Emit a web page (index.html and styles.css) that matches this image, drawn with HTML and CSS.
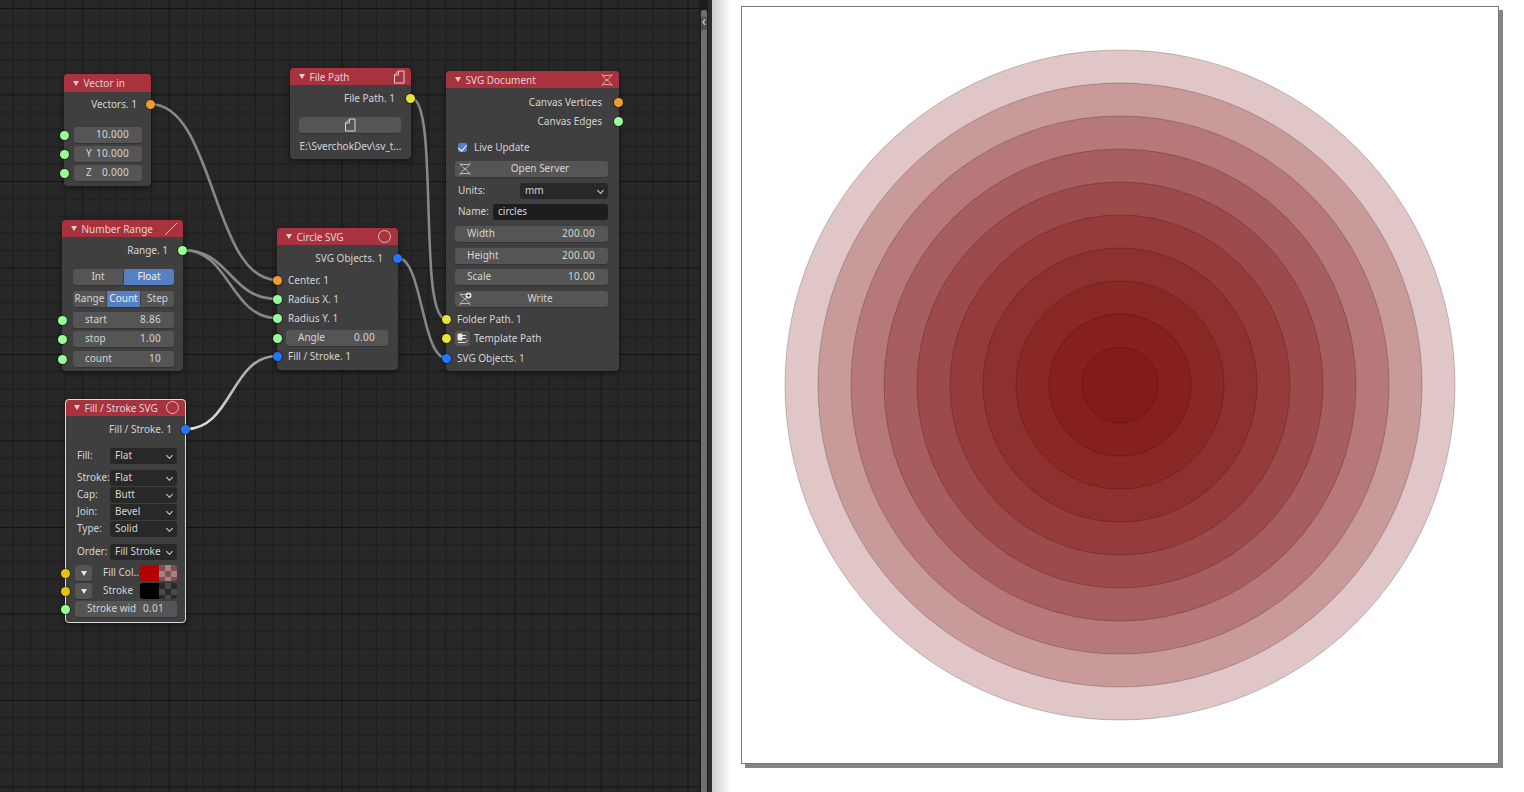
FILE: index.html
```html
<!DOCTYPE html>
<html lang="en">
<head>
<meta charset="UTF-8">
<meta name="viewport" content="width=device-width, initial-scale=1.0">
<title>SVG Document nodes</title>
<link rel="stylesheet" href="styles.css">
</head>
<body>

<svg class="defs" width="0" height="0">
  <defs>
    <pattern id="grid" patternUnits="userSpaceOnUse" width="86.5" height="86.5">
      <path class="grid-minor" d="M13.1 0V86.5M30.4 0V86.5M47.7 0V86.5M65 0V86.5M0 25.6H86.5M0 42.9H86.5M0 60.2H86.5M0 77.5H86.5"/>
      <path class="grid-major" d="M82.5 0V86.5M0 8.5H86.5"/>
    </pattern>
    <linearGradient id="wireFill" gradientUnits="userSpaceOnUse" x1="186" y1="429" x2="277" y2="356">
      <stop offset="0" stop-color="#e6e6e6"/>
      <stop offset="1" stop-color="#9a9a9a"/>
    </linearGradient>
    <symbol id="icoDna" viewBox="0 0 14 14">
      <path d="M2 1C2 5 12 9 12 13M12 1C12 5 2 9 2 13M3 2.5H11M3 11.5H11" fill="none" stroke="currentColor" stroke-width="1" stroke-opacity="0.75"/>
    </symbol>
    <symbol id="icoFile" viewBox="0 0 14 14">
      <path d="M6.5 1H12V13H2.5V5ZM6.5 1V5H2.5" fill="none" stroke="currentColor" stroke-width="1"/>
    </symbol>
  </defs>
</svg>

<div class="editor">
  <svg class="grid-layer" width="100%" height="100%"><rect width="100%" height="100%" fill="url(#grid)"/></svg>

  <!-- wires -->
  <svg class="wire-layer" width="712" height="792">
    <g class="wires">
      <path d="M150 104C215 104 212 280 277 280"/>
      <path d="M183 250C230 250 230 299 277 299"/>
      <path d="M183 250C230 250 230 318 277 318"/>
      <path d="M411 98C440 98 417 319 446 319"/>
      <path d="M398 258C422 258 422 358 446 358"/>
      <path class="wire-hot" d="M186 429C232 429 231 356 277 356"/>
    </g>
  </svg>

  <div class="node n-vector">
    <div class="title"><i class="arrow"></i><span>Vector in</span></div>
    <div class="row row-out mt4">Vectors. 1<b class="sock right orange"></b></div>
    <div class="row mt15"><b class="sock left green"></b><div class="field"><span></span><span>10.000</span></div></div>
    <div class="row mt3"><b class="sock left green"></b><div class="field"><span>Y</span><span>10.000</span></div></div>
    <div class="row mt3"><b class="sock left green"></b><div class="field"><span>Z</span><span>0.000</span></div></div>
  </div>

  <div class="node n-range">
    <div class="title"><i class="arrow"></i><span>Number Range</span>
      <svg class="ico" width="14" height="14" viewBox="0 0 14 14"><path d="M1 13L13 1" stroke="currentColor" fill="none"/></svg>
    </div>
    <div class="row row-out mt5">Range. 1<b class="sock right green"></b></div>
    <div class="row mt11"><div class="seg"><span>Int</span><span class="on">Float</span></div></div>
    <div class="row mt6"><div class="seg"><span>Range</span><span class="on">Count</span><span>Step</span></div></div>
    <div class="row mt5"><b class="sock left green"></b><div class="field"><span>start</span><span>8.86</span></div></div>
    <div class="row mt3"><b class="sock left green"></b><div class="field"><span>stop</span><span>1.00</span></div></div>
    <div class="row mt4"><b class="sock left green"></b><div class="field"><span>count</span><span>10</span></div></div>
  </div>

  <div class="node n-fill">
    <div class="title"><i class="arrow"></i><span>Fill / Stroke SVG</span><i class="ring"></i></div>
    <div class="row row-out mt5">Fill / Stroke. 1<b class="sock right blue"></b></div>
    <div class="row mt11"><span class="lab">Fill:</span><div class="sel">Flat</div></div>
    <div class="row mt6"><span class="lab">Stroke:</span><div class="sel">Flat</div></div>
    <div class="row mt1"><span class="lab">Cap:</span><div class="sel">Butt</div></div>
    <div class="row mt1"><span class="lab">Join:</span><div class="sel">Bevel</div></div>
    <div class="row mt1"><span class="lab">Type:</span><div class="sel">Solid</div></div>
    <div class="row mt7"><span class="lab">Order:</span><div class="sel">Fill Stroke</div></div>
    <div class="row mt5"><b class="sock left yellow"></b><div class="drop"><i class="arrow"></i></div><span class="col-name">Fill Col..</span><div class="swatch sw-red"><i></i><i></i></div></div>
    <div class="row mt2"><b class="sock left yellow"></b><div class="drop"><i class="arrow"></i></div><span class="col-name">Stroke</span><div class="swatch sw-black"><i></i><i></i></div></div>
    <div class="row mt2"><b class="sock left green"></b><div class="field"><span>Stroke wid</span><span>0.01</span></div></div>
  </div>

  <div class="node n-file">
    <div class="title"><i class="arrow"></i><span>File Path</span>
      <svg class="ico" width="14" height="14"><use href="#icoFile"/></svg>
    </div>
    <div class="row row-out mt5">File Path. 1<b class="sock right yellow"></b></div>
    <div class="row mt11"><div class="btn btn-center"><svg width="14" height="14"><use href="#icoFile"/></svg></div></div>
    <div class="row mt5 path-text">E:\SverchokDev\sv_t...</div>
  </div>

  <div class="node n-circle">
    <div class="title"><i class="arrow"></i><span>Circle SVG</span><i class="ring"></i></div>
    <div class="row row-out mt5">SVG Objects. 1<b class="sock right blue"></b></div>
    <div class="row row-in mt6"><b class="sock left orange"></b>Center. 1</div>
    <div class="row row-in mt3"><b class="sock left green"></b>Radius X. 1</div>
    <div class="row row-in mt3"><b class="sock left green"></b>Radius Y. 1</div>
    <div class="row mt4"><b class="sock left green"></b><div class="field"><span>Angle</span><span>0.00</span></div></div>
    <div class="row row-in mt2"><b class="sock left blue"></b>Fill / Stroke. 1</div>
  </div>

  <div class="node n-doc">
    <div class="title"><i class="arrow"></i><span>SVG Document</span>
      <svg class="ico" width="14" height="14"><use href="#icoDna"/></svg>
    </div>
    <div class="row row-out mt6">Canvas Vertices<b class="sock right orange"></b></div>
    <div class="row row-out mt3">Canvas Edges<b class="sock right green"></b></div>
    <div class="row row-check mt10"><i class="check"></i>Live Update</div>
    <div class="row mt6"><div class="btn"><svg width="14" height="14"><use href="#icoDna"/></svg><span>Open Server</span></div></div>
    <div class="row mt6"><span class="lab lab-wide">Units:</span><div class="sel">mm</div></div>
    <div class="row mt5"><span class="lab lab-name">Name:</span><div class="text-in">circles</div></div>
    <div class="row mt6"><div class="field"><span>Width</span><span>200.00</span></div></div>
    <div class="row mt6"><div class="field"><span>Height</span><span>200.00</span></div></div>
    <div class="row mt5"><div class="field"><span>Scale</span><span>10.00</span></div></div>
    <div class="row mt6"><div class="btn"><svg width="14" height="14" viewBox="0 0 14 14"><use href="#icoDna"/><circle cx="10.5" cy="3.5" r="3" fill="#e6e6e6"/><path d="M10.5 1.8V5.2M8.8 3.5H12.2" stroke="#444"/></svg><span>Write</span></div></div>
    <div class="row row-in mt4"><b class="sock left yellow"></b>Folder Path. 1</div>
    <div class="row row-plug mt3"><b class="sock left yellow"></b>
      <div class="plug"><svg width="14" height="14" viewBox="0 0 14 14"><path d="M3 3H7V9H3ZM7 4.5H11M7 7.5H11M3 11.5H9.5C11 11.5 12 10.5 12 9.5" fill="none" stroke="#e6e6e6"/><path d="M3 3H7V9H3Z" fill="#e6e6e6"/></svg></div>
      Template Path
    </div>
    <div class="row row-in mt4"><b class="sock left blue"></b>SVG Objects. 1</div>
  </div>

  <div class="scroll-gutter"><div class="scroll-thumb"><div class="scroll-tab">&#8249;</div></div></div>
</div>

<div class="viewer">
  <div class="sheet">
    <svg class="circles" width="756" height="756" viewBox="0 0 756 756">
      <g transform="translate(378 378)">
        <circle r="335"/><circle r="302"/><circle r="269"/><circle r="236"/><circle r="203"/>
        <circle r="170"/><circle r="137"/><circle r="104"/><circle r="71"/><circle r="38"/>
      </g>
    </svg>
  </div>
</div>

</body>
</html>
```
FILE: styles.css
```css
* {
  box-sizing: border-box;
}
body {
  margin: 0;
  width: 1524px;
  height: 792px;
  overflow: hidden;
  display: flex;
  background-color: #fff;
  font-family: "Noto Sans", "Open Sans", sans-serif;
  font-size: 10px;
  color: #d4d4d4;
}
.defs {
  position: absolute;
}
.grid-minor {
  fill: none;
  stroke: #1c1c1c;
  stroke-width: 1;
}
.grid-major {
  fill: none;
  stroke: #131313;
  stroke-width: 1;
}

/* node editor */
.editor {
  position: relative;
  flex: 0 0 712px;
  height: 792px;
  background-color: #272727;
  overflow: hidden;
}
.grid-layer, .wire-layer {
  position: absolute;
  left: 0;
  top: 0;
}
.wires path {
  fill: none;
  stroke: #878787;
  stroke-width: 2.6;
}
.wires .wire-hot {
  stroke: url(#wireFill);
}
.scroll-gutter {
  position: absolute;
  right: 0;
  top: 0;
  bottom: 0;
  width: 14px;
  padding: 10px 5px 0 3px;
  background: linear-gradient(to right, #27272700, #1c1c1c 20%, #1c1c1c 70%, #2c2c2c 72%);
}
.scroll-thumb {
  height: 100%;
  width: 6px;
  background-color: #6f6f6f;
  border-radius: 3px 3px 0 0;
}
.scroll-tab {
  height: 20px;
  border-radius: 3px 3px 0 0;
  background: linear-gradient(#6f6f6f 30%, #505050 40%);
  color: #d0d0d0;
  font-size: 14px;
  line-height: 22px;
  text-align: center;
}

.node {
  position: absolute;
  background-color: #3f3f3f;
  border-radius: 4px;
  box-shadow: 0 2px 6px rgba(0, 0, 0, 0.45);
}
.n-vector { left: 64px; top: 74px; width: 87px; height: 112px; --pl: 10px; --pr: 9px; --po: 14px; }
.n-range { left: 62px; top: 220px; width: 121px; height: 151px; --pl: 11px; --pr: 9px; --po: 15px; }
.n-fill { left: 65px; top: 399px; width: 121px; height: 224px; --pl: 10px; --pr: 9px; --po: 14px; outline: 1px solid #dcdcdc; outline-offset: -1px; }
.n-file { left: 290px; top: 68px; width: 121px; height: 91px; --pl: 9px; --pr: 10px; --po: 16px; }
.n-circle { left: 277px; top: 228px; width: 121px; height: 142px; --pl: 9px; --pr: 10px; --po: 15px; }
.n-doc { left: 446px; top: 71px; width: 173px; height: 300px; --pl: 9px; --pr: 11px; --po: 17px; }
.n-vector .title { height: 18px; }

.title {
  display: flex;
  align-items: center;
  height: 17px;
  padding: 0 5px 0 9px;
  background-color: #a8323e;
  border-radius: 4px 4px 0 0;
  color: #e0d4d4;
}
.title span {
  flex: 1;
  white-space: nowrap;
}
.arrow {
  flex: none;
  width: 0;
  height: 0;
  margin-right: 4.5px;
  border-left: 3px solid transparent;
  border-right: 3px solid transparent;
  border-top: 5px solid #e0d0d0;
}
.ring {
  flex: none;
  width: 13px;
  height: 13px;
  margin-right: 2px;
  border: 1px solid #d8c0c0;
  border-radius: 50%;
}
.ico {
  flex: none;
  color: #e0d0d0;
}

.row {
  position: relative;
  display: flex;
  align-items: center;
  height: 16px;
  padding: 0 var(--pr) 0 var(--pl);
  white-space: nowrap;
}
.row-out {
  justify-content: flex-end;
  padding-right: var(--po);
}
.row-in {
  padding-left: 11px;
}
.row-check {
  padding-left: 12px;
}
.row-plug {
  padding-left: 9px;
  gap: 4px;
}
.path-text {
  justify-content: center;
  padding: 0;
}

.mt1 { margin-top: 1px; }
.mt2 { margin-top: 2px; }
.mt3 { margin-top: 3px; }
.mt4 { margin-top: 4px; }
.mt5 { margin-top: 5px; }
.mt6 { margin-top: 6px; }
.mt7 { margin-top: 7px; }
.mt10 { margin-top: 10px; }
.mt11 { margin-top: 11px; }
.mt15 { margin-top: 15px; }

/* sockets sit on the node edge */
.sock {
  position: absolute;
  top: 3.5px;
  width: 9px;
  height: 9px;
  border-radius: 50%;
  box-shadow: 0 0 0 1px rgba(0, 0, 0, 0.35);
}
.sock.left { left: -4.5px; }
.sock.right { right: -4px; }
.orange { background-color: #ed9e2f; }
.green { background-color: #96ff96; }
.blue { background-color: #1f78ff; }
.yellow { background-color: #e8e337; }
.n-fill .yellow { background-color: #e8c400; }

.field, .btn, .seg span, .drop {
  background-color: #555;
  border-radius: 3px;
  box-shadow: 0 1px 0 rgba(0, 0, 0, 0.18);
}
.field {
  flex: 1;
  display: flex;
  justify-content: space-between;
  align-items: center;
  height: 16px;
  padding: 0 13px 2px 12px;
}
.field span:last-child {
  letter-spacing: 0.3px;
}
.btn {
  flex: 1;
  display: flex;
  align-items: center;
  height: 16px;
  padding-left: 3px;
}
.btn span {
  flex: 1;
  text-align: center;
  margin-top: -2px;
}
.btn svg {
  flex: none;
  color: #d8d8d8;
}
.btn-center {
  justify-content: center;
  padding: 0;
}
.seg {
  flex: 1;
  display: flex;
  gap: 1px;
  height: 16px;
}
.seg span {
  flex: 1;
  text-align: center;
  line-height: 15px;
  border-radius: 0;
}
.seg span:first-child {
  border-radius: 3px 0 0 3px;
}
.seg span:last-child {
  border-radius: 0 3px 3px 0;
}
.seg .on {
  background-color: #5680c2;
  color: #f0f0f0;
}

.lab {
  flex: none;
  width: 33px;
  margin-left: 2px;
  margin-top: -2px;
}
.lab-wide {
  width: 62px;
  margin-left: 3px;
}
.lab-name {
  width: 35px;
  margin-left: 3px;
}
.sel {
  position: relative;
  flex: 1;
  height: 16px;
  padding-left: 5px;
  background-color: #282828;
  border-radius: 3px;
  line-height: 14px;
}
.sel::after {
  content: "";
  position: absolute;
  right: 5px;
  top: 5px;
  width: 4px;
  height: 4px;
  border-right: 1px solid #d0d0d0;
  border-bottom: 1px solid #d0d0d0;
  transform: rotate(45deg);
}
.text-in {
  flex: 1;
  height: 16px;
  padding-left: 5px;
  background-color: #1d1d1d;
  border-radius: 3px;
  line-height: 14px;
}

.check {
  position: relative;
  flex: none;
  width: 9px;
  height: 9px;
  margin-right: 7px;
  background-color: #5680c2;
  border-radius: 2px;
}
.check::after {
  content: "";
  position: absolute;
  left: 2px;
  top: 0;
  width: 4px;
  height: 7px;
  border-right: 1px solid #fff;
  border-bottom: 1px solid #fff;
  transform: rotate(40deg);
}
.plug {
  flex: none;
  width: 15px;
  height: 15px;
  background-color: #555;
  border-radius: 3px;
}

.drop {
  flex: none;
  display: flex;
  align-items: center;
  justify-content: center;
  width: 17px;
  height: 16px;
}
.drop .arrow {
  margin: 0;
  border-top-color: #e8e8e8;
}
.col-name {
  flex: 1;
  margin: -2px 0 0 11px;
}
.swatch {
  flex: none;
  display: flex;
  width: 37px;
  height: 16px;
  border-radius: 3px;
  overflow: hidden;
}
.swatch i {
  flex: 1;
}
.sw-red i:first-child {
  background-color: #b30000;
}
.sw-red i:last-child {
  background: repeating-conic-gradient(#a98181 0 25%, #7d5151 0 50%) 0 0 / 12px 12px;
}
.sw-black i:first-child {
  background-color: #000;
}
.sw-black i:last-child {
  background: repeating-conic-gradient(#4a4a4a 0 25%, #2a2a2a 0 50%) 0 0 / 12px 12px;
}

/* svg preview */
.viewer {
  flex: 1;
  height: 792px;
  padding: 6px 0 0 29px;
  background: linear-gradient(to right, #cdcdcd, #fff 19px) no-repeat;
}
.sheet {
  width: 758px;
  height: 758px;
  border: 1px solid #777;
  background-color: #fff;
  box-shadow: 4px 4px 0 #858585;
}
.circles {
  display: block;
}
.circles circle {
  fill: #7a0e0e;
  fill-opacity: 0.235;
  stroke: #000;
  stroke-opacity: 0.3;
  stroke-width: 0.7;
}
```
